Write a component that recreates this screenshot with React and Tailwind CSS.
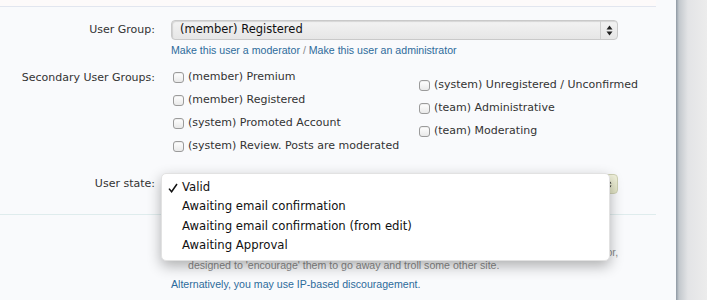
function SelectArrows() {
    return (
        <svg width="7" height="11" viewBox="0 0 7 11" className="text-[#222]">
            <path d="M3.5 0.5 L6.5 4.5 L0.5 4.5 Z" fill="currentColor" />
            <path d="M3.5 10.5 L6.5 6.5 L0.5 6.5 Z" fill="currentColor" />
        </svg>
    );
}

function Checkbox({ label }) {
    return (
        <div className="flex items-center h-[23px] gap-[4px]">
            <span className="w-[11px] h-[11px] rounded-[3px] border border-[#9b9b9b] bg-gradient-to-b from-white to-[#e9e9e9] shadow-[inset_0_1px_0_rgba(0,0,0,0.06)]" />
            <span>{label}</span>
        </div>
    );
}

export default function App() {
    const left = [
        "(member) Premium",
        "(member) Registered",
        "(system) Promoted Account",
        "(system) Review. Posts are moderated",
    ];
    const right = [
        "(system) Unregistered / Unconfirmed",
        "(team) Administrative",
        "(team) Moderating",
    ];
    const states = [
        "Awaiting email confirmation",
        "Awaiting email confirmation (from edit)",
        "Awaiting Approval",
    ];

    return (
        <div className="w-[707px] h-[300px] flex overflow-hidden bg-[#f9fafc] text-[#333] font-['DejaVu_Sans',sans-serif] text-[11px]">
            <div className="w-[676px] pr-[20px]">
                {/* top rule */}
                <div className="h-[7px] border-b border-[#e2e6ef] bg-[#fdfafa]" />

                {/* USER GROUP */}
                <div className="grid grid-cols-[155px_1fr] gap-x-4 mt-[13px]">
                    <div className="text-right h-[20px] leading-[20px]">User Group:</div>
                    <div>
                        <div className="w-[447px] h-[20px] rounded-[4px] border border-[#c9c9c9] bg-gradient-to-b from-[#f3f3f3] to-[#e6e6e6] shadow-[inset_1px_1px_1px_rgba(0,0,0,0.12)] flex items-center">
                            <span className="flex-1 pl-[8px] text-[#111] text-[11.5px]">(member) Registered</span>
                            <span className="w-[17px] h-full border-l border-[#cfcfcf] flex items-center justify-center">
                                <SelectArrows />
                            </span>
                        </div>
                        <div className="mt-[4px] h-[12px] leading-[12px] font-['Liberation_Sans',sans-serif] text-[10.6px] text-[#2d6b9b]">
                            Make this user a moderator <span className="text-[#888]">/</span> Make this user an administrator
                        </div>
                    </div>
                </div>

                {/* SECONDARY GROUPS */}
                <div className="grid grid-cols-[155px_1fr] gap-x-4 mt-[10px]">
                    <div className="text-right h-[23px] leading-[23px]">Secondary User Groups:</div>
                    <div className="flex pl-[2px]">
                        <div className="w-[246px]">
                            {left.map((l) => <Checkbox key={l} label={l} />)}
                        </div>
                        <div className="mt-[8px]">
                            {right.map((l) => <Checkbox key={l} label={l} />)}
                        </div>
                    </div>
                </div>

                {/* USER STATE */}
                <div className="grid grid-cols-[155px_1fr] gap-x-4 mt-[16px] relative">
                    <div className="text-right h-[20px] leading-[20px]">User state:</div>
                    <div className="w-[447px] h-[20px] rounded-[4px] border border-[#cfd1b4] bg-gradient-to-b from-[#f1f2dc] to-[#e3e5c6] flex items-center justify-end">
                        <span className="w-[17px] h-full flex items-center justify-center">
                            <SelectArrows />
                        </span>
                    </div>

                    {/* open menu */}
                    <div className="absolute left-[161px] top-[-1px] w-[449px] pt-[4px] pb-[4px] bg-white rounded-[5px] border border-[#e2e2e2] shadow-[0_5px_14px_rgba(0,0,0,0.3)] z-10 text-[11.7px] text-[#111]">
                        <div className="h-[19.5px] flex items-center">
                            <span className="w-[20px] pl-[6px] flex items-center">
                                <svg width="10" height="10" viewBox="0 0 10 10">
                                    <path d="M1 5.6 L3.6 8.8 L9 1" fill="none" stroke="#111" strokeWidth="1.5" />
                                </svg>
                            </span>
                            <span>Valid</span>
                        </div>
                        {states.map((s) => (
                            <div key={s} className="h-[19.5px] flex items-center pl-[20px]">{s}</div>
                        ))}
                    </div>
                </div>

                <div className="mt-[20px] border-t border-[#dfeced]" />

                {/* DISCOURAGE */}
                <div className="grid grid-cols-[155px_1fr] gap-x-4 mt-[31px]">
                    <div />
                    <div className="font-['Liberation_Sans',sans-serif] text-[10.6px]">
                        <div className="pl-[17px] leading-[13px] text-[#8a8a8a] whitespace-nowrap">
                            <div className="tracking-[-0.07px]">Discouraged users are subjected to annoying random delays and failures in system behavior,</div>
                            <div>designed to 'encourage' them to go away and troll some other site.</div>
                        </div>
                        <div className="mt-[6px] leading-[13px] text-[#2d6b9b]">
                            Alternatively, you may use IP-based discouragement.
                        </div>
                    </div>
                </div>
            </div>

            <div className="flex-1 bg-[linear-gradient(to_right,#8e98a3,#c3c8cd_3px,#e3e4e6_12px,#ececec)]" />
        </div>
    );
}
